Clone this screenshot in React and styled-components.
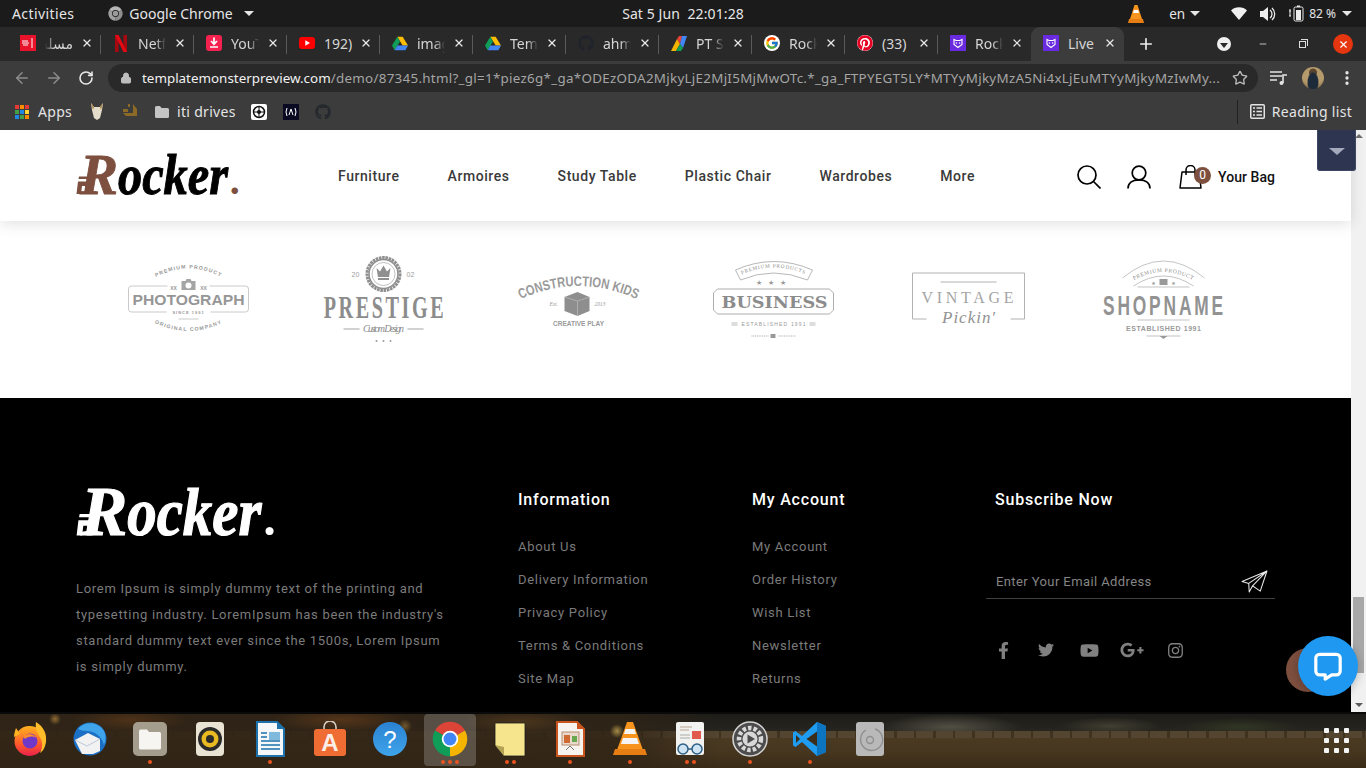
import React from 'react';
import styled, { createGlobalStyle } from 'styled-components';
import { ArrowLeft, ArrowRight, RotateCw, Lock, Star, X, Plus, Minus, MoreVertical } from 'lucide-react';
import { FaFacebookF, FaTwitter, FaYoutube, FaGooglePlusG, FaInstagram, FaGithub, FaPinterest } from 'react-icons/fa';
import { FcGoogle } from 'react-icons/fc';

const Global = createGlobalStyle`
  html, body { margin: 0; padding: 0; background: #000; overflow: hidden; }
  * { box-sizing: border-box; }
`;
const uiFont = `"Noto Sans", "DejaVu Sans", sans-serif`;
const webFont = `Roboto, "Liberation Sans", sans-serif`;
const BROWN = '#7d4f3f';

const Screen = styled.div`
  width: 1366px; height: 768px; overflow: hidden; display: flex; flex-direction: column;
  font-family: ${uiFont}; color: #e4e4e4;
`;

/* ---------- GNOME top bar ---------- */
const TopBar = styled.header`
  height: 27px; background: #1b1b1b; display: grid; grid-template-columns: 1fr auto 1fr; align-items: center;
  font-size: 14px; color: #e6e6e6;
`;
const TopLeft = styled.div`display: flex; align-items: center; padding-left: 12px;`;
const Activities = styled.span`letter-spacing: .4px;`;
const AppMenu = styled.div`display: flex; align-items: center; gap: 6px; margin-left: 34px;`;
const Clock = styled.div`white-space: pre; letter-spacing: .1px;`;
const Tray = styled.div`display: flex; align-items: center; justify-content: flex-end; padding-right: 14px;`;
const TrayItem = styled.div`display: flex; align-items: center; margin-left: ${p => p.$ml || 0}px; font-size: ${p => p.$size || 13.5}px;`;
const Caret = styled.span`
  display: inline-block; width: 0; height: 0; border-left: 5px solid transparent; border-right: 5px solid transparent;
  border-top: 5px solid #e6e6e6; margin-left: ${p => p.$ml || 5}px;
`;

/* ---------- tabs ---------- */
const TabStrip = styled.div`height: 34px; background: #292929; display: flex; align-items: stretch; padding-left: 8px;`;
const Tab = styled.div`
  width: 93px; position: relative; display: flex; align-items: center; padding: 0 0 2px 12px;
  background: ${p => (p.$active ? '#3c3c3c' : 'transparent')};
  border-radius: ${p => (p.$active ? '9px 9px 0 0' : '0')};
  ${p => p.$sep && `&::after { content: ''; position: absolute; right: 0; top: 8px; width: 1px; height: 19px; background: #5a5a5a; }`}
`;
const TabIconBox = styled.div`width: 16px; height: 16px; display: flex; flex: none; align-items: center; justify-content: center;`;
const TabTitle = styled.div`
  width: 28px; margin-left: 9px; overflow: hidden; white-space: nowrap; font-size: 14px; color: #d6d6d6; flex: none;
  direction: ${p => (p.$rtl ? 'rtl' : 'ltr')};
  mask-image: ${p => (p.$rtl ? 'linear-gradient(to left, #000 65%, transparent)' : p.$nofade ? 'none' : 'linear-gradient(to right, #000 62%, transparent)')};
`;
const TabClose = styled.div`width: 12px; height: 12px; margin-left: 8px; display: flex; align-items: center; justify-content: center; color: #e8e8e8; flex: none;`;
const NewTab = styled.div`width: 44px; display: flex; align-items: center; justify-content: center; color: #eee;`;
const TabSearch = styled.div`width: 14px; height: 14px; border-radius: 50%; background: #f0f0f0; margin-left: 49px; align-self: center; display: flex; align-items: center; justify-content: center;`;
const TabSearchArrow = styled.span`width: 0; height: 0; margin-top: 2px; border-left: 4px solid transparent; border-right: 4px solid transparent; border-top: 5px solid #292929;`;
const WinBtn = styled.div`
  width: 20px; height: 20px; align-self: center; display: flex; align-items: center; justify-content: center; color: #ddd;
  margin-left: ${p => p.$ml}px; border-radius: 50%; background: ${p => (p.$close ? '#e6360f' : 'transparent')};
`;
const RestoreGlyph = styled.span`
  width: 7px; height: 7px; border: 1px solid #ddd; position: relative; display: block;
  &::before { content: ''; position: absolute; left: 1px; top: -3px; width: 6px; height: 6px; border: 1px solid #ddd; border-left: 0; border-bottom: 0; }
`;

/* ---------- toolbar ---------- */
const Toolbar = styled.div`height: 34px; background: #3c3c3c; display: flex; align-items: center; padding: 0 2px 0 6px;`;
const ToolBtn = styled.div`width: ${p => p.$w || 32}px; height: 28px; display: flex; align-items: center; justify-content: center; color: ${p => (p.$dim ? '#8c8c8c' : '#e8e8e8')}; flex: none;`;
const Omnibox = styled.div`flex: 1; min-width: 0; height: 28px; margin: 0 4px 0 6px; border-radius: 14px; background: #292929; display: flex; align-items: center; padding: 0 10px 0 12px; gap: 10px; color: #bdbdbd;`;
const UrlText = styled.div`flex: 1; min-width: 0; overflow: hidden; white-space: nowrap; font-size: 13.4px; color: #a5a5a5; letter-spacing: .28px;`;
const UrlHost = styled.span`color: #f0f0f0; letter-spacing: 0;`;
const Avatar = styled.div`width: 22px; height: 22px; border-radius: 50%; background: radial-gradient(ellipse 6px 11px at 50% 70%, #1d2a3a 0 80%, transparent 100%), radial-gradient(circle at 50% 25%, #5a4630 0 18%, #b59a6c 22% 60%, #8b7450 80%);`;

/* ---------- bookmarks ---------- */
const Bookmarks = styled.nav`height: 35px; background: #3c3c3c; display: flex; align-items: center; padding: 0 14px 2px 15px; font-size: 14px; letter-spacing: .3px; color: #e4e4e4;`;
const Mark = styled.div`display: flex; align-items: center; gap: ${p => p.$gap || 0}px; margin-left: ${p => p.$ml || 0}px; flex: none;`;
const AppGrid = styled.div`display: grid; grid-template-columns: repeat(3, 4px); grid-auto-rows: 4px; gap: 1px;`;
const AppDot = styled.span`background: ${p => p.$c};`;
const ReadingList = styled.div`margin-left: auto; display: flex; align-items: center; gap: 7px; height: 24px; border-left: 1px solid #222; padding-left: 12px;`;

/* ---------- page ---------- */
const Viewport = styled.div`height: 582px; display: flex; position: relative; overflow: hidden; background: #fff;`;
const Page = styled.main`width: 1351px; flex: none; display: flex; flex-direction: column;`;
const Header = styled.div`
  height: 91px; display: flex; align-items: center; padding: 0 76px; background: #fff;
  box-shadow: 0 3px 14px rgba(0,0,0,.12); position: relative; font-family: ${webFont};
`;
const Nav = styled.div`display: flex; gap: 48px; margin-left: 98px; padding-top: 1px;`;
const NavLink = styled.a`font-size: 14px; font-weight: 500; letter-spacing: .57px; color: #3a3a3a;`;
const HeaderActions = styled.div`margin-left: auto; display: flex; align-items: center; padding-top: 2px;`;
const ActionIcon = styled.div`width: 24px; height: 24px; margin-right: ${p => p.$mr}px; color: #000; position: relative; flex: none;`;
const Badge = styled.span`
  position: absolute; left: 15px; top: 2px; width: 17px; height: 17px; border-radius: 50%; background: ${BROWN};
  color: #fff; font-size: 12px; display: flex; align-items: center; justify-content: center;
`;
const BagLabel = styled.span`font-size: 14px; font-weight: 500; color: #111; letter-spacing: .05px;`;
const ScrollTopTab = styled.div`
  position: absolute; right: 10px; top: 0; width: 39px; height: 41px; background: #2d3550; border: 1px solid #3d4663; border-top: 0;
  border-radius: 0 0 3px 3px; display: flex; align-items: center; justify-content: center;
`;
const ScrollTopArrow = styled.span`width: 0; height: 0; margin-top: 2px; border-left: 8px solid transparent; border-right: 8px solid transparent; border-top: 7px solid #a4a9bb;`;

const LogoRow = styled.section`display: grid; grid-template-columns: repeat(6, 195px); padding: 29px 0 38px 90.5px; background: #fff;`;
const BrandSvg = styled.svg`display: block; width: 195px; height: 110px; overflow: visible;`;

const Footer = styled.footer`
  flex: 1; background: #000; display: grid; grid-template-columns: 442px 234px 234px 289px; padding: 91px 0 0 76px;
  font-family: ${webFont}; overflow: hidden;
`;
const About = styled.p`margin: 38px 0 0; font-size: 13px; line-height: 26px; letter-spacing: .7px; color: #7b7b7b; width: 372px;`;
const FootTitle = styled.h4`margin: 0; padding: 1px 0 0 ${p => p.$pl || 0}px; font-size: 16px; font-weight: 500; line-height: 20px; letter-spacing: .8px; color: #fff;`;
const FootLinks = styled.ul`list-style: none; margin: 20px 0 0; padding: 0;`;
const FootLink = styled.li`font-size: 13px; line-height: 33px; letter-spacing: .7px; color: #7b7b7b;`;
const EmailRow = styled.div`margin-top: 54px; height: 35px; display: flex; align-items: center; justify-content: space-between; border-bottom: 1px solid #3f3f3f; padding: 0 7px 0 10px;`;
const EmailHint = styled.span`font-size: 13px; letter-spacing: .4px; color: #858585;`;
const Socials = styled.div`display: flex; gap: 27px; margin-top: 39px; padding-left: 9px; height: 24px; align-items: center; color: #808080;`;
const SocialIcon = styled.a`
  width: 16px; display: flex; justify-content: center; font-size: ${p => p.$size || 16}px; color: #808080;
  svg { flex: none; }
`;

const ScrollBar = styled.aside`width: 15px; flex: none; background: #f1f1f1; display: flex; flex-direction: column; align-items: center;`;
const ScrollUp = styled.span`margin-top: 4px; width: 0; height: 0; border-left: 4px solid transparent; border-right: 4px solid transparent; border-bottom: 4px solid #6e6e6e;`;
const ScrollThumb = styled.div`width: 11px; height: 76px; margin-top: 459px; background: #a8a8a8;`;
const ScrollDown = styled.span`margin-top: auto; margin-bottom: 5px; width: 0; height: 0; border-left: 4px solid transparent; border-right: 4px solid transparent; border-top: 4px solid #5a5a5a;`;

const BrownBlob = styled.div`position: absolute; right: 36px; bottom: 20px; width: 44px; height: 44px; border-radius: 50%; background: ${BROWN};`;
const ChatBubble = styled.div`
  position: absolute; right: 8px; bottom: 16px; width: 60px; height: 60px; border-radius: 50%; background: #1e98f0;
  display: flex; align-items: center; justify-content: center; box-shadow: 0 2px 10px rgba(0,0,0,.25);
`;

/* ---------- dock ---------- */
const Dock = styled.div`
  height: 56px; display: flex; position: relative; flex: none; border-top: 2px solid #0a0a0a;
  background:
    radial-gradient(circle 6px at 55px 5px, rgba(235,175,80,.5), transparent),
    radial-gradient(circle 7px at 405px 12px, rgba(235,185,90,.35), transparent),
    radial-gradient(circle 7px at 617px 17px, rgba(240,205,100,.6), transparent),
    radial-gradient(ellipse 60px 12px at 130px 6px, rgba(170,90,30,.25), transparent),
    radial-gradient(ellipse 70px 12px at 340px 6px, rgba(170,90,30,.3), transparent),
    radial-gradient(ellipse 60px 12px at 520px 8px, rgba(150,100,45,.28), transparent),
    linear-gradient(90deg, rgba(48,36,22,.92) 0, rgba(48,36,22,.85) 620px, transparent 720px),
    repeating-linear-gradient(90deg, #544530 0 17px, #3f3320 17px 19.500px) 0 17px / 100% 7px no-repeat,
    radial-gradient(ellipse 70px 13px at 950px 13px, rgba(120,115,100,.55), transparent),
    radial-gradient(ellipse 50px 9px at 1110px 12px, rgba(110,105,80,.4), transparent),
    radial-gradient(ellipse 60px 9px at 1240px 13px, rgba(60,70,40,.55), transparent),
    linear-gradient(180deg, #1d1c18 0, #26251f 17px, #4a3a22 24px, #46361f 38px, #3a2b18 100%);
`;
const DockItem = styled.div`
  width: 52px; height: 52px; margin: 0 4px; flex: none; border-radius: 4px; padding-top: 7px;
  display: flex; flex-direction: column; align-items: center;
  background: ${p => (p.$active ? 'rgba(255,255,255,.2)' : 'transparent')};
`;
const DockIcon = styled.svg`width: 36px; height: 36px; display: block; flex: none;`;
const DockDots = styled.div`display: flex; gap: 3px; height: 5px; margin-top: 3px;`;
const DockDot = styled.span`width: 4px; height: 4px; border-radius: 50%; background: #e95420;`;
const ShowApps = styled.div`
  position: absolute; right: 17px; top: 14px; display: grid; grid-template-columns: repeat(3, 5px); grid-auto-rows: 5px; gap: 5px;
`;
const ShowAppsDot = styled.span`background: #f4f4f4; border-radius: 1px;`;
const RoundFavicon = styled.span`background: #fff; border-radius: 50%; width: 16px; height: 16px; display: flex; align-items: center; justify-content: center;`;

/* ---------- drawings ---------- */
const ChromeLogo = ({ size = 36, mono }) => (
  <svg width={size} height={size} viewBox="0 0 48 48">
    <path d="M24 24 4.100 12.500A23 23 0 0 1 43.900 12.500Z" fill={mono ? '#b5b5b5' : '#db4437'} />
    <path d="M24 24 43.900 12.500A23 23 0 0 1 24 47Z" fill={mono ? '#8e8e8e' : '#f4b400'} />
    <path d="M24 24 24 47A23 23 0 0 1 4.100 12.500Z" fill={mono ? '#a0a0a0' : '#0f9d58'} />
    <circle cx="24" cy="24" r="11" fill={mono ? '#1b1b1b' : '#fff'} />
    <circle cx="24" cy="24" r="8.600" fill={mono ? '#9a9a9a' : '#4285f4'} />
  </svg>
);
const Drive = () => (
  <svg width="16" height="15" viewBox="0 0 24 22">
    <path d="M8 1h8l8 13h-8z" fill="#fbbc04" />
    <path d="M8 1 0 14l4 7 8-13z" fill="#0f9d58" />
    <path d="M4 21h16l4-7H8z" fill="#4285f4" />
  </svg>
);
const Tiger = () => (
  <svg width="16" height="16" viewBox="0 0 16 16">
    <rect width="16" height="16" fill="#6a2be0" />
    <path d="M4 4.500 6 5.500h4l2-1v5L8 12.500 4 9.500z" fill="none" stroke="#fff" strokeWidth="1.100" />
    <circle cx="6.400" cy="8" r=".8" fill="#fff" /><circle cx="9.600" cy="8" r=".8" fill="#fff" />
  </svg>
);
const tabIcons = {
  masjid: <svg width="16" height="16" viewBox="0 0 16 16"><rect width="16" height="16" fill="#e8132a" /><path d="M2 6h6M2 8h7M3 10h5M12 3v10" stroke="#fff" strokeWidth="1" /></svg>,
  netflix: <svg width="12" height="17" viewBox="0 0 12 17"><path d="M0 0h3.600v17L0 17z" fill="#a50a12" /><path d="M8.400 0H12v17H8.400z" fill="#a50a12" /><path d="M0 0h3.600L12 17H8.400z" fill="#e50914" /></svg>,
  ytdl: <svg width="16" height="16" viewBox="0 0 16 16"><rect width="16" height="16" rx="3" fill="#f5224f" /><path d="M8 2.500v6M5 6l3 3.200L11 6M4 12h8" stroke="#fff" strokeWidth="1.700" fill="none" /></svg>,
  yt: <svg width="16" height="12" viewBox="0 0 16 12"><rect width="16" height="12" rx="3" fill="#f00" /><path d="M6.300 3.300 11 6 6.300 8.700z" fill="#fff" /></svg>,
  drive: <Drive />,
  github: <FaGithub size={16} color="#20242a" />,
  pt: <svg width="16" height="15" viewBox="0 0 16 15"><path d="M0 15 6 3l3 5-4 7z" fill="#f4b400" /><path d="M6 3 8 0l3 0-2 8z" fill="#ea4335" /><path d="M9 8l2-8 5 0-4 12z" fill="#4285f4" /><path d="M5 15l4-7 3 4-2 3z" fill="#0f9d58" /></svg>,
  google: <RoundFavicon><FcGoogle size={14} /></RoundFavicon>,
  pin: <RoundFavicon><FaPinterest size={16} color="#e60023" /></RoundFavicon>,
  tiger: <Tiger />,
};
const tabs = [
  { t: 'مسلسل', i: 'masjid', rtl: true },
  { t: 'Netflix', i: 'netflix' }, { t: 'YouTube', i: 'ytdl' }, { t: '192)', i: 'yt', nofade: true },
  { t: 'images', i: 'drive' }, { t: 'Templates', i: 'drive' }, { t: 'ahmed', i: 'github' }, { t: 'PT Sans', i: 'pt' },
  { t: 'Rocker', i: 'google' }, { t: '(33)', i: 'pin', nofade: true }, { t: 'Rocker', i: 'tiger' }, { t: 'Live', i: 'tiger', active: true, nofade: true },
];

const Logo = ({ main, width, height }) => {
  const accent = main === '#000' ? BROWN : main;
  return (
    <svg width={width} height={height} viewBox="0 0 164 40" style={{ display: 'block', flex: 'none', overflow: 'visible' }}>
      <g fill={accent} stroke={accent} strokeWidth=".9">
        <path d="M.5 38 2 25.500h13L13.500 38h-5l1-8H6l-1 8zM3 20.500h13l-.5 2.500H2.500z" strokeWidth="0" />
        <text x="4" y="38" fontFamily="'Liberation Serif', serif" fontWeight="700" fontStyle="italic" fontSize="57">R</text>
      </g>
      <text x="42" y="38" fill={main} stroke={main} strokeWidth="1" fontFamily="'Liberation Serif', serif" fontWeight="700" fontStyle="italic" fontSize="56" textLength="110" lengthAdjust="spacingAndGlyphs">ocker</text>
      <text x="154" y="38" fill={accent} fontFamily="Lato, sans-serif" fontWeight="900" fontSize="40">.</text>
    </svg>
  );
};

const sansF = "'Liberation Sans', sans-serif";
const serifF = "'Liberation Serif', serif";
const G = '#979797';
const Brand = ({ children }) => <BrandSvg viewBox="-97.5 0 195 110">{children}</BrandSvg>;

const Photograph = () => (
  <Brand>
    <path id="ph1" d="M-36 29 Q0 8 36 29" fill="none" />
    <path id="ph2" d="M-36 72 Q0 90 36 72" fill="none" />
    <text fontFamily={sansF} fontWeight="700" fontSize="5.200" letterSpacing="1.100" fill={G}><textPath href="#ph1" startOffset="50%" textAnchor="middle">PREMIUM PRODUCT</textPath></text>
    <text fontFamily={sansF} fontWeight="700" fontSize="5.200" letterSpacing="1.100" fill={G}><textPath href="#ph2" startOffset="50%" textAnchor="middle">ORIGINAL COMPANY</textPath></text>
    <path d="M-7 31h4l1-2h4l1 2h4v9H-7z" fill="#a5a5a5" /><circle cx="0" cy="35.500" r="3" fill="#fff" />
    <text x="-15" y="40" textAnchor="middle" fontFamily={sansF} fontWeight="700" fontSize="5" fill={G}>XX</text>
    <text x="15" y="40" textAnchor="middle" fontFamily={sansF} fontWeight="700" fontSize="5" fill={G}>XX</text>
    <path d="M-21 36H-57a3 3 0 0 0-3 3v20a3 3 0 0 0 3 3H-22M22 62H57a3 3 0 0 0 3-3V39a3 3 0 0 0-3-3H21M-10 69H10" fill="none" stroke="#bdbdbd" strokeWidth=".8" />
    <text x="0" y="55" textAnchor="middle" fontFamily={sansF} fontWeight="700" fontSize="14.500" textLength="112" lengthAdjust="spacingAndGlyphs" fill="#969696">PHOTOGRAPH</text>
    <text x="0" y="64" textAnchor="middle" fontFamily={sansF} fontWeight="700" fontSize="4" letterSpacing="1" fill={G}>SINCE 1991</text>
  </Brand>
);
const Prestige = () => (
  <Brand>
    <circle cx="0" cy="24" r="16.500" fill="none" stroke="#8f8f8f" strokeWidth="3" strokeDasharray="2.600 .7" />
    <circle cx="0" cy="24" r="14.500" fill="none" stroke="#8f8f8f" strokeWidth="1.600" />
    <circle cx="0" cy="24" r="11.500" fill="none" stroke="#a5a5a5" strokeWidth=".7" />
    <path d="M-7 18l3.500 3.500L0 15.500l3.500 6L7 18l-1.500 9h-11zM-5.500 28h11v2h-11z" fill="#8f8f8f" />
    <text x="-28" y="27" textAnchor="middle" fontFamily={sansF} fontSize="7" fill="#a0a0a0">20</text>
    <text x="27" y="27" textAnchor="middle" fontFamily={sansF} fontSize="7" fill="#a0a0a0">02</text>
    <text transform="translate(1.500 68) scale(.65 1)" x="0" y="0" textAnchor="middle" fontFamily={serifF} fontWeight="700" fontSize="31" letterSpacing="4" fill="#8c8c8c">PRESTIGE</text>
    <path d="M-40 79H-24M24 79H40" stroke="#a5a5a5" strokeWidth="1.200" />
    <text x="0" y="82" textAnchor="middle" fontFamily={serifF} fontStyle="italic" fontSize="10" textLength="41" fill="#8c8c8c">Custom Design</text>
    <circle cx="-7" cy="91" r="1" fill="#999" /><circle cx="0" cy="91" r="1" fill="#999" /><circle cx="7" cy="91" r="1" fill="#999" />
  </Brand>
);
const Construction = () => (
  <Brand>
    <path id="co1" d="M-60 50 Q0 22 60 50" fill="none" />
    <text fontFamily={sansF} fontWeight="700" fontSize="14" fill="#9a9a9a" textAnchor="middle"><textPath href="#co1" startOffset="50%" textLength="120" lengthAdjust="spacingAndGlyphs">CONSTRUCTION KIDS</textPath></text>
    <path d="M-14 47-1 42 11 47V61L-1 66-14 61Z" fill="#8e8e8e" />
    <path d="M-14 47-1 51 11 47M-1 51V66" fill="none" stroke="#c4c4c4" strokeWidth=".6" />
    <text x="-29" y="56" fontFamily={serifF} fontStyle="italic" fontSize="5.500" fill="#999">Est.</text>
    <text x="16" y="56" fontFamily={serifF} fontStyle="italic" fontSize="5.500" fill="#999">2013</text>
    <text x="0" y="75.500" textAnchor="middle" fontFamily={sansF} fontWeight="700" fontSize="7.500" textLength="51" lengthAdjust="spacingAndGlyphs" fill="#9a9a9a">CREATIVE PLAY</text>
  </Brand>
);
const Business = () => (
  <Brand>
    <path id="bu1" d="M-33 25 Q0 10 33 25" fill="none" />
    <path d="M-38 20 Q0 3 39 20L34 30 Q0 16-33 30Z" fill="none" stroke="#a5a5a5" strokeWidth=".8" />
    <text fontFamily={serifF} fontSize="5.200" letterSpacing=".8" fill="#8c8c8c"><textPath href="#bu1" startOffset="50%" textAnchor="middle">PREMIUM PRODUCTS</textPath></text>
    <text x="0" y="35" textAnchor="middle" fontFamily={sansF} fontSize="7" letterSpacing="6" fill="#999">★★★</text>
    <path d="M-56 39H56L60 43V60L56 64H-56L-60 60V43Z" fill="none" stroke="#a5a5a5" strokeWidth=".9" />
    <text x="1" y="58" textAnchor="middle" fontFamily="'DejaVu Serif', serif" fontWeight="700" fontSize="17" textLength="106" lengthAdjust="spacingAndGlyphs" fill="#8c8c8c">BUSINESS</text>
    <text x="0" y="76" textAnchor="middle" fontFamily={sansF} fontSize="5" textLength="64" fill="#9a9a9a">ESTABLISHED 1991</text>
    <path d="M-42 73H-36M-42 75H-36M36 73H42M36 75H42" stroke="#aaa" strokeWidth=".8" />
    <path d="M-22 86H-5M5 86H22" stroke="#aaa" strokeWidth="1" strokeDasharray="1 .8" /><rect x="-3" y="84" width="5" height="4" fill="#999" />
  </Brand>
);
const Vintage = () => (
  <Brand>
    <path d="M-42 69H-56V23H56V69H42M-28 32H28" fill="none" stroke="#a9a9a9" strokeWidth=".9" />
    <text x="-1" y="53" textAnchor="middle" fontFamily={serifF} fontSize="16" textLength="92" fill="#a5a5a5">VINTAGE</text>
    <text x="0" y="73" textAnchor="middle" fontFamily={serifF} fontStyle="italic" fontSize="17" textLength="53" fill="#929292">Pickin'</text>
  </Brand>
);
const Shopname = () => (
  <Brand>
    <path id="sh1" d="M-34 33 Q0 11 34 33" fill="none" />
    <path d="M-41 28 Q0 -6 41 28M-30 36 Q0 16 30 36M-26 37H26M-26 70H26M-17 86H17" fill="none" stroke="#aaa" strokeWidth=".7" />
    <text fontFamily={serifF} fontSize="5.500" letterSpacing=".6" fill="#8c8c8c"><textPath href="#sh1" startOffset="50%" textAnchor="middle">PREMIUM PRODUCT</textPath></text>
    <rect x="-4" y="29" width="8" height="6" fill="#999" />
    <text x="-10" y="35" textAnchor="middle" fontSize="5" fill="#999">★</text>
    <text x="10" y="35" textAnchor="middle" fontSize="5" fill="#999">★</text>
    <text transform="translate(1 65) scale(.62 1)" x="0" y="0" textAnchor="middle" fontFamily={sansF} fontWeight="700" fontSize="28" letterSpacing="4.600" fill="#929292">SHOPNAME</text>
    <text x="0" y="81" textAnchor="middle" fontFamily={sansF} fontWeight="700" fontSize="7" textLength="75" fill="#9a9a9a">ESTABLISHED 1991</text>
    <path d="M-4 86H4L0 89Z" fill="#999" />
  </Brand>
);

const dockIcons = [
  { key: 'firefox', dots: 0, art: (<>
    <defs><linearGradient id="ff" x1="0" y1="0" x2="0" y2="1"><stop offset="0" stopColor="#ffb320" /><stop offset=".6" stopColor="#ff5a2a" /><stop offset="1" stopColor="#e8204c" /></linearGradient></defs>
    <circle cx="17.500" cy="20" r="15" fill="url(#ff)" />
    <path d="M24 1c8 5 11 12 10 20-1 6-3 9-6 11 3-6 3-12-1-17-2-4-4-8-3-14z" fill="#ffbd2a" />
    <path d="M4 7c-1 3-2 6-2 9l6-3z" fill="#ffb320" />
    <circle cx="18" cy="20" r="7.500" fill="#6f38c9" /><path d="M11 15c4-3 10-3 14 2-4-2-8-2-12 1z" fill="#ff8c2a" />
  </>) },
  { key: 'thunderbird', dots: 0, art: (<>
    <circle cx="18" cy="18" r="16.500" fill="#1b6fc4" /><path d="M6 8C12 0 26 0 32 10c2 4 2 10 0 14-2-9-10-14-17-14-4 0-7-1-9-2z" fill="#3fa4ea" />
    <path d="M3 19l13-7 12 6v12l-7 3H10z" fill="#f2f2f2" /><path d="M3 19l12 6 13-7" fill="none" stroke="#bcc8d6" strokeWidth="1" />
  </>) },
  { key: 'files', dots: 1, art: (<>
    <rect x="1" y="1" width="34" height="34" rx="5" fill="#a49d8e" /><path d="M7 10a1.500 1.500 0 0 1 1.500-1.500H15l2 2.500h10.500A1.500 1.500 0 0 1 29 12.500V27a1.500 1.500 0 0 1-1.500 1.500h-19A1.500 1.500 0 0 1 7 27z" fill="#f6f5f2" />
  </>) },
  { key: 'rhythmbox', dots: 0, art: (<>
    <rect x="4" y="1" width="28" height="34" rx="4" fill="#e9e3d4" /><circle cx="18" cy="18" r="12" fill="#2a2a2a" /><circle cx="18" cy="18" r="8.500" fill="#e8b921" /><circle cx="18" cy="18" r="4" fill="#2a2a2a" />
  </>) },
  { key: 'writer', dots: 1, art: (<>
    <path d="M5 1h20l7 7v27H5z" fill="#f5f7f9" stroke="#1d72ab" strokeWidth="2" /><path d="M25 1l7 7h-7z" fill="#1d72ab" /><rect x="17" y="11" width="11" height="8" fill="#7fb9dc" /><path d="M9 12h6M9 16h6M9 20h19M9 24h19M9 28h19" stroke="#1d72ab" strokeWidth="1.600" />
  </>) },
  { key: 'store', dots: 0, art: (<>
    <path d="M12 9V6a6 6 0 0 1 12 0v3" fill="none" stroke="#d5d0c8" strokeWidth="1.600" /><rect x="2" y="8" width="32" height="27" rx="3" fill="#ef6c33" />
    <text x="18" y="30" textAnchor="middle" fontFamily={sansF} fontWeight="700" fontSize="24" fill="#fbeee6">A</text>
  </>) },
  { key: 'help', dots: 0, art: (<>
    <defs><linearGradient id="hp" x1="0" y1="0" x2="0" y2="1"><stop offset="0" stopColor="#2a82d2" /><stop offset="1" stopColor="#3fa4ea" /></linearGradient></defs>
    <circle cx="18" cy="18" r="17" fill="url(#hp)" /><text x="18" y="27" textAnchor="middle" fontFamily={sansF} fontSize="24" fill="#fff">?</text>
  </>) },
  { key: 'chrome', dots: 3, active: true, chrome: true },
  { key: 'notes', dots: 2, art: (<>
    <path d="M3 2H33V35H12L3 24Z" fill="#f6e58d" stroke="#1d1d1d" strokeWidth=".8" /><path d="M3 24 12 26V35Z" fill="#b3a352" />
  </>) },
  { key: 'impress', dots: 1, art: (<>
    <path d="M5 1h20l7 7v27H5z" fill="#f7f3ef" stroke="#c9541d" strokeWidth="2" /><path d="M25 1l7 7h-7z" fill="#c9541d" /><rect x="10" y="11" width="17" height="13" fill="#e8d9cc" stroke="#b98d70" /><rect x="12" y="14" width="6" height="8" fill="#d06a32" /><rect x="20" y="15" width="5" height="6" fill="#6aa84f" /><path d="M14 29l4-4 4 4" stroke="#777" fill="none" />
  </>) },
  { key: 'vlc', dots: 1, art: (<>
    <path d="M15 1h6l10 28H5z" fill="#f7941d" /><path d="M13.500 8h9l1.500 5H12zM11 17h14l2 6H9z" fill="#f4f4f4" /><path d="M3 28h30l2 6H1z" fill="#e77e14" />
  </>) },
  { key: 'reader', dots: 2, art: (<>
    <rect x="4" y="1" width="28" height="33" rx="2" fill="#f2f2f0" /><path d="M8 6h12M8 9h9" stroke="#b5a68d" strokeWidth="1.200" /><rect x="20" y="10" width="9" height="8" fill="#e05a4e" /><path d="M8 14h10M8 17h10" stroke="#aaa" />
    <circle cx="11" cy="28" r="5" fill="#cfe4f2" stroke="#2d5f86" strokeWidth="1.500" /><circle cx="25" cy="28" r="5" fill="#cfe4f2" stroke="#2d5f86" strokeWidth="1.500" /><path d="M16 28h4" stroke="#2d5f86" strokeWidth="1.500" />
  </>) },
  { key: 'settings', dots: 1, art: (<>
    <circle cx="18" cy="18" r="17" fill="#4c4c4c" stroke="#d5d5d5" strokeWidth="1.500" /><circle cx="18" cy="18" r="11" fill="none" stroke="#d8d8d8" strokeWidth="4.500" strokeDasharray="3.500 2" /><circle cx="18" cy="18" r="7.500" fill="#d8d8d8" /><path d="M15.500 13.500 23 18l-7.500 4.500z" fill="#4c4c4c" />
  </>) },
  { key: 'vscode', dots: 1, art: (<>
    <path d="M25 1 10 15 3.500 10 1 11.500v13L3.500 26 10 21l15 14 9-4V5z" fill="#1f9cf0" /><path d="M25 1l9 4v26l-9 4z" fill="#0d74bf" /><path d="M25 10.500 14.500 18 25 25.500z" fill="#3b2d1c" /><path d="M4 14l4 4-4 4z" fill="#3b2d1c" />
  </>) },
  { key: 'disk', dots: 0, art: (<>
    <rect x="4" y="1" width="28" height="34" rx="3" fill="#b9b9b9" /><path d="M23 8a11 11 0 1 1-9 1" fill="none" stroke="#8f8f8f" strokeWidth="1.400" /><circle cx="18" cy="19" r="3.500" fill="none" stroke="#8f8f8f" strokeWidth="1.400" />
  </>) },
];

const appColors = ['#e53935', '#fb8c00', '#e53935', '#43a047', '#1e88e5', '#fdd835', '#1e88e5', '#43a047', '#fb8c00'];
const urlRest = '/demo/87345.html?_gl=1*piez6g*_ga*ODEzODA2MjkyLjE2MjI5MjMwOTc.*_ga_FTPYEGT5LY*MTYyMjkyMzA5Ni4xLjEuMTYyMjkyMzIwMy...';

export default function App() {
  return (
    <Screen>
      <Global />
      <TopBar>
        <TopLeft>
          <Activities>Activities</Activities>
          <AppMenu><ChromeLogo size={15} mono /><span>Google Chrome</span><Caret /></AppMenu>
        </TopLeft>
        <Clock>Sat 5 Jun  22:01:28</Clock>
        <Tray>
          <TrayItem>
            <svg width="16" height="18" viewBox="0 0 16 18"><path d="M6.500 0h3L14 14H2z" fill="#f7941d" /><path d="M5.800 5h4.400l.8 3H5z" fill="#fff" /><path d="M1 14h14l1 4H0z" fill="#e77e14" /></svg>
          </TrayItem>
          <TrayItem $ml={25}>en<Caret $ml={5} /></TrayItem>
          <TrayItem $ml={31}>
            <svg width="16" height="13" viewBox="0 0 16 13"><path d="M0 3.500C4-.8 12-.8 16 3.500L8 13z" fill="#f0f0f0" /></svg>
          </TrayItem>
          <TrayItem $ml={13}>
            <svg width="17" height="16" viewBox="0 0 17 16"><path d="M0 5h3l5-4v14l-5-4H0z" fill="#ececec" /><path d="M10 4a5 5 0 0 1 0 8M12 2a8 8 0 0 1 0 12" fill="none" stroke="#ececec" strokeWidth="1.300" /></svg>
          </TrayItem>
          <TrayItem $ml={11}>
            <svg width="16" height="17" viewBox="0 0 16 17"><path d="M1 6h2M2 4v7M1 11h2" stroke="#ececec" fill="none" /><rect x="6" y="2" width="9" height="14" rx="1.500" fill="none" stroke="#ececec" /><rect x="8" y="5" width="5" height="10" fill="#ececec" /><rect x="9" y="0.500" width="3" height="1.500" fill="#ececec" /></svg>
          </TrayItem>
          <TrayItem $ml={5} $size={12}>82 %<Caret $ml={6} /></TrayItem>
        </Tray>
      </TopBar>

      <TabStrip>
        {tabs.map((tb, i) => (
          <Tab key={i} $active={tb.active} $sep={i < 10}>
            <TabIconBox>{tabIcons[tb.i]}</TabIconBox>
            <TabTitle $rtl={tb.rtl} $nofade={tb.nofade}>{tb.t}</TabTitle>
            <TabClose><X size={12} strokeWidth={2.4} /></TabClose>
          </Tab>
        ))}
        <NewTab><Plus size={18} strokeWidth={2.2} /></NewTab>
        <TabSearch><TabSearchArrow /></TabSearch>
        <WinBtn $ml={22}><Minus size={10} /></WinBtn>
        <WinBtn $ml={19}><RestoreGlyph /></WinBtn>
        <WinBtn $ml={21} $close><X size={11} color="#fff" strokeWidth={2.4} /></WinBtn>
      </TabStrip>

      <Toolbar>
        <ToolBtn $dim><ArrowLeft size={18} /></ToolBtn>
        <ToolBtn $dim><ArrowRight size={18} /></ToolBtn>
        <ToolBtn><RotateCw size={16} strokeWidth={2.4} /></ToolBtn>
        <Omnibox>
          <Lock size={12} fill="#bdbdbd" strokeWidth={2} />
          <UrlText><UrlHost>templatemonsterpreview.com</UrlHost>{urlRest}</UrlText>
          <Star size={16} />
        </Omnibox>
        <ToolBtn $w={34}>
          <svg width="18" height="16" viewBox="0 0 18 16"><path d="M0 2h12M0 6h12M0 10h7" stroke="#e4e4e4" strokeWidth="1.600" /><path d="M13 13V5h4" stroke="#e4e4e4" strokeWidth="1.600" fill="none" /><circle cx="11.500" cy="13" r="2" fill="#e4e4e4" /></svg>
        </ToolBtn>
        <ToolBtn $w={34}><Avatar /></ToolBtn>
        <ToolBtn $w={34}><MoreVertical size={18} strokeWidth={2.4} /></ToolBtn>
      </Toolbar>

      <Bookmarks>
        <Mark $gap={9}>
          <AppGrid>{appColors.map((c, i) => <AppDot key={i} $c={c} />)}</AppGrid>
          <span>Apps</span>
        </Mark>
        <Mark $ml={18}>
          <svg width="14" height="17" viewBox="0 0 14 17"><path d="M1 0 4 4h6l3-4-1 7-2 8-3 2-3-2-2-8z" fill="#e4dccb" /><path d="M1 0 4 4 3 7zM13 0 10 4l1 3z" fill="#b08a44" /></svg>
        </Mark>
        <Mark $ml={18}>
          <svg width="16" height="15" viewBox="0 0 16 15"><path d="M11 0v9H1l3 3h11V5zM1 5v3h5V5zM6 0h2v3H6z" fill="#8a6a24" /></svg>
        </Mark>
        <Mark $ml={17} $gap={8}>
          <svg width="14" height="12" viewBox="0 0 14 12"><path d="M0 1.500A1.500 1.500 0 0 1 1.500 0H5l1.500 2h6A1.500 1.500 0 0 1 14 3.500v7A1.500 1.500 0 0 1 12.500 12h-11A1.500 1.500 0 0 1 0 10.500z" fill="#c4c4c4" /></svg>
          <span>iti drives</span>
        </Mark>
        <Mark $ml={15}>
          <svg width="16" height="16" viewBox="0 0 16 16"><rect width="16" height="16" rx="2" fill="#fff" /><circle cx="8" cy="8" r="5.500" fill="none" stroke="#111" strokeWidth="1.500" /><path d="M8 3v10M3 8h10" stroke="#111" strokeWidth="1" /><circle cx="8" cy="8" r="2" fill="#111" /></svg>
        </Mark>
        <Mark $ml={16}>
          <svg width="16" height="16" viewBox="0 0 16 16"><rect width="16" height="16" fill="#0a0a23" /><path d="M4 4Q2 8 4 12M12 4q2 4 0 8M6 11 8 5l2 6" stroke="#fff" strokeWidth="1" fill="none" /></svg>
        </Mark>
        <Mark $ml={16}><FaGithub size={16} color="#25292e" /></Mark>
        <ReadingList>
          <svg width="15" height="15" viewBox="0 0 15 15"><rect x=".75" y=".75" width="13.500" height="13.500" rx="1" fill="none" stroke="#e4e4e4" strokeWidth="1.500" /><path d="M3 4h2M6.500 4H12M3 7.500h2M6.500 7.500H12M3 11h2M6.500 11H12" stroke="#e4e4e4" strokeWidth="1.300" /></svg>
          <span>Reading list</span>
        </ReadingList>
      </Bookmarks>

      <Viewport>
        <Page>
          <Header>
            <Logo main="#000" width={164} height={40} />
            <Nav>
              {['Furniture', 'Armoires', 'Study Table', 'Plastic Chair', 'Wardrobes', 'More'].map(n => <NavLink key={n}>{n}</NavLink>)}
            </Nav>
            <HeaderActions>
              <ActionIcon $mr={26}>
                <svg width="24" height="24" viewBox="0 0 24 24"><circle cx="10" cy="10" r="9" fill="none" stroke="#000" strokeWidth="1.700" /><path d="M16.500 16.500 23.500 23.500" stroke="#000" strokeWidth="1.700" /></svg>
              </ActionIcon>
              <ActionIcon $mr={28}>
                <svg width="24" height="24" viewBox="0 0 24 24"><circle cx="12" cy="8" r="6.800" fill="none" stroke="#000" strokeWidth="1.700" /><path d="M1 23.500c0-6 5-8.700 11-8.700s11 2.700 11 8.700" fill="none" stroke="#000" strokeWidth="1.700" /></svg>
              </ActionIcon>
              <ActionIcon $mr={15}>
                <svg width="24" height="24" viewBox="0 0 24 24"><path d="M3 7h17l2 16H1z" fill="none" stroke="#000" strokeWidth="1.500" strokeLinejoin="round" /><path d="M7 10V5a4.500 4.500 0 0 1 9 0v5" fill="none" stroke="#000" strokeWidth="1.500" /></svg>
                <Badge>0</Badge>
              </ActionIcon>
              <BagLabel>Your Bag</BagLabel>
            </HeaderActions>
          </Header>

          <LogoRow>
            <Photograph /><Prestige /><Construction /><Business /><Vintage /><Shopname />
          </LogoRow>

          <Footer>
            <div>
              <Logo main="#fff" width={200} height={49} />
              <About>Lorem Ipsum is simply dummy text of the printing and typesetting industry. LoremIpsum has been the industry's standard dummy text ever since the 1500s, Lorem Ipsum is simply dummy.</About>
            </div>
            <div>
              <FootTitle>Information</FootTitle>
              <FootLinks>{['About Us', 'Delivery Information', 'Privacy Policy', 'Terms & Conditions', 'Site Map'].map(l => <FootLink key={l}>{l}</FootLink>)}</FootLinks>
            </div>
            <div>
              <FootTitle>My Account</FootTitle>
              <FootLinks>{['My Account', 'Order History', 'Wish List', 'Newsletter', 'Returns'].map(l => <FootLink key={l}>{l}</FootLink>)}</FootLinks>
            </div>
            <div>
              <FootTitle $pl={9}>Subscribe Now</FootTitle>
              <EmailRow>
                <EmailHint>Enter Your Email Address</EmailHint>
                <svg width="27" height="23" viewBox="0 0 28 24"><path d="M1 12 27 1 20 22 12 16.500 8.500 23 8 14ZM27 1 8 14M27 1 12 16.500" fill="none" stroke="#e8e8e8" strokeWidth="1.100" strokeLinejoin="round" /></svg>
              </EmailRow>
              <Socials>
                <SocialIcon $size={17}><FaFacebookF /></SocialIcon>
                <SocialIcon><FaTwitter /></SocialIcon>
                <SocialIcon $size={19}><FaYoutube /></SocialIcon>
                <SocialIcon $size={24}><FaGooglePlusG /></SocialIcon>
                <SocialIcon $size={17}><FaInstagram /></SocialIcon>
              </Socials>
            </div>
          </Footer>
        </Page>
        <ScrollBar>
          <ScrollUp /><ScrollThumb /><ScrollDown />
        </ScrollBar>
        <ScrollTopTab><ScrollTopArrow /></ScrollTopTab>
        <BrownBlob />
        <ChatBubble>
          <svg width="30" height="30" viewBox="0 0 32 32"><path d="M7 3.500h18a4 4 0 0 1 4 4v14a4 4 0 0 1-4 4h-5l-7 4.500v-4.500H7a4 4 0 0 1-4-4v-14a4 4 0 0 1 4-4z" fill="none" stroke="#fff" strokeWidth="3.400" strokeLinejoin="round" /></svg>
        </ChatBubble>
      </Viewport>

      <Dock>
        {dockIcons.map(d => (
          <DockItem key={d.key} $active={d.active}>
            {d.chrome ? <ChromeLogo size={36} /> : <DockIcon viewBox="0 0 36 36">{d.art}</DockIcon>}
            <DockDots>{Array.from({ length: d.dots }).map((_, i) => <DockDot key={i} />)}</DockDots>
          </DockItem>
        ))}
        <ShowApps>{Array.from({ length: 9 }).map((_, i) => <ShowAppsDot key={i} />)}</ShowApps>
      </Dock>
    </Screen>
  );
}
